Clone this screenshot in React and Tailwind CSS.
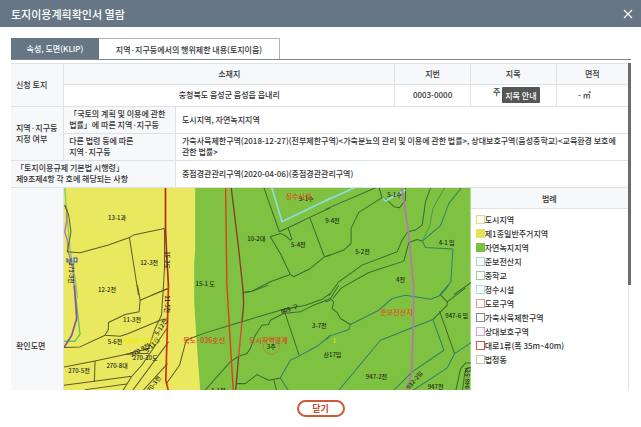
import React from "react";

const LINE = "#5d5b2c";
const FIELD = "#3a6b34";
const WATER = "#2f7f70";

// The survey is drawn in six sheets, each at three units to the map pixel.
const sheets = [
  {
    at: "translate(60 185) scale(0.33333)",
    lines: [
      ["#7bd06a", 4, "14,0 20,80 30,190 42,260 48,300 52,340"],
      ["#b36fc4", 4, "14,60 21,75 20,110 14,140 22,165 25,200 38,250 45,330"],
      [LINE, 3, "14,60 26,90 33,140 22,200 60,203 145,180 208,157 220,150 312,130"],
      [LINE, 3, "208,157 235,330"],
      [LINE, 3, "313,130 313,250 308,332"],
      [LINE, 3, "275,330 325,310"],
      ["#b3261c", 5, "316,0 316,130 320,220 325,302"],
    ],
  },
  {
    at: "translate(60 285) scale(0.33333)",
    lines: [
      ["#62c45a", 4, "48,40 60,147 45,168 12,168"],
      ["#8a4fa8", 5, "43,0 50,100 35,150 12,187"],
      [LINE, 3, "232,0 240,45 237,80 195,88 145,112 145,132 135,150 180,153 205,145 300,105 325,100"],
      [LINE, 3, "240,45 322,10"],
      [LINE, 3, "135,150 60,185 12,187"],
      [LINE, 3, "12,245 105,227 195,208 240,205 265,205"],
      [LINE, 3, "105,227 103,290"],
      [LINE, 3, "12,300 215,273 245,240 320,130"],
      [LINE, 3, "75,313 200,296"],
      [LINE, 3, "215,273 186,320"],
      [LINE, 3, "214,320 325,170"],
      [LINE, 3, "245,320 322,235"],
      [LINE, 3, "308,30 304,90 285,130 265,190 195,208"],
      [LINE, 3, "318,296 358,240 378,165 396,158"],
      ["#d92b1c", 5, "325,0 322,110 317,285 328,330"],
    ],
  },
  {
    at: "translate(190 185) scale(0.33333)",
    lines: [
      [FIELD, 3, "218,0 267,140 300,125 358,97 420,68"],
      ["#8fdde0", 5, "242,0 275,110 420,40"],
      [FIELD, 3, "293,128 305,162 300,165 285,152 270,145 240,155 270,205 300,268 310,275 360,250 402,215 358,97"],
      [FIELD, 3, "402,215 420,210"],
      [FIELD, 3, "160,322 185,318 240,290 300,268"],
      ["#df3a20", 4, "106,0 110,302"],
      ["#8a3b2c", 4, "122,0 145,190 160,330"],
    ],
  },
  {
    at: "translate(190 285) scale(0.33333)",
    lines: [
      [FIELD, 3, "0,160 45,143 120,120 280,72 345,60 395,42 420,25"],
      [FIELD, 3, "160,22 185,18 235,0"],
      [FIELD, 3, "420,40 370,60 330,80 280,85 240,105 235,118 215,120 195,150 180,190 170,205 145,213 120,230 40,320"],
      [FIELD, 3, "280,72 327,212"],
      [WATER, 3, "420,150 385,180 327,212 300,225 270,278 297,320"],
      [FIELD, 3, "138,295 165,295 200,268 235,285 270,278"],
      [FIELD, 3, "250,282 260,320"],
      ["#df3a20", 4, "110,0 120,170 130,330"],
      ["#8a3b2c", 4, "159,20 160,60 155,110"],
      ["#d84a3c", 4, "155,110 145,215"],
      ["#8a3b2c", 4, "145,215 135,330"],
    ],
  },
  {
    at: "translate(325 185) scale(0.33333)",
    lines: [
      ["#8fdde0", 5, "0,47 95,5"],
      [FIELD, 3, "0,73 160,4"],
      [FIELD, 3, "0,215 55,195 77,175 77,130 100,82 170,38 185,45 205,65 222,68 240,45 240,0"],
      [FIELD, 3, "158,0 170,38"],
      ["#8fdde0", 5, "172,38 180,48 240,15"],
      [FIELD, 3, "10,332 40,290 110,240 215,200 230,165 247,140 270,135 290,120 300,50 318,0"],
      [FIELD, 3, "22,340 48,308 130,262 235,228 250,172 275,163 290,168"],
      [WATER, 3, "290,168 300,187 382,192 376,290 342,330"],
      [WATER, 3, "290,168 345,122 370,55 414,0"],
      ["#4b9a4c", 3, "290,168 312,125 322,70 362,0"],
      [FIELD, 3, "385,328 437,292"],
      ["#b876b0", 5, "228,0 250,150 264,302"],
    ],
  },
  {
    at: "translate(325 285) scale(0.33333)",
    lines: [
      [WATER, 3, "0,165 15,152 70,133 75,118 160,75 200,40 240,30 315,42 345,30 370,0"],
      [FIELD, 3, "75,118 45,100 35,82 20,70 25,50 15,40 40,0"],
      [FIELD, 3, "0,50 15,45"],
      [FIELD, 3, "345,30 365,50 420,8"],
      [FIELD, 3, "365,50 365,60 322,103"],
      [WATER, 3, "322,103 165,165 36,320"],
      [WATER, 3, "322,103 355,195 260,260 200,320"],
      [FIELD, 3, "342,78 387,205"],
      [WATER, 3, "437,172 387,205 365,248 255,320"],
      [FIELD, 3, "390,320 405,250 420,233 437,233"],
      [FIELD, 3, "410,320 418,260 425,248 437,246"],
      ["#b876b0", 5, "264,0 263,130 258,265 240,320"],
    ],
  },
];

const lots = [
  ["13-1과", 117, 220], ["12-3전", 149, 265], ["12-2전", 107, 292],
  ["11-3전", 132, 322], ["5-6전", 115, 344], ["270-10도", 145, 360],
  ["270-8대", 117, 368], ["270-5전", 79, 373], ["10-2대", 256, 241],
  ["15-1 도", 205, 286], ["5-4전", 298, 247], ["5-1수", 306, 201],
  ["9-4전", 332, 223], ["5-1수", 394, 197], ["5-2전", 362, 254],
  ["4-1 임", 446, 245], ["4전", 400, 282], ["3-7전", 319, 328],
  ["3주", 271, 349], ["산17임", 332, 357], ["947-2전", 376, 379],
  ["947-6 임", 456, 318], ["947전", 435, 389], ["1-1전", 218, 393],
];

const turnedLots = [
  ["15-3도", 167, 260, 90], ["11-5전", 167, 304, 90], ["271-3전", 71, 273, 90],
  ["5-12전", 161, 327, -58], ["270-9전", 140, 350, -28], ["5-11전", 152, 345, -45],
  ["270-3전", 153, 385, -52], ["809-구", 289, 309, -18], ["932-2임", 414, 380, -50],
  ["948-5전", 467, 378, -88],
];

const zones = [
  ["정수시설", 298, 199, "#d9501f"],
  ["북도·036호선", 204, 343, "#d9421f"],
  ["도시지역경계", 268, 343, "#d9421f"],
  ["준보전산지", 396, 315, "#e0501c"],
];

function CadastralMap() {
  return (
    <svg
      viewBox="64 188 406 318"
      preserveAspectRatio="xMinYMin slice"
      className="block h-[318px] w-full"
      role="img"
      aria-label="확인도면"
    >
      <rect x="64" y="188" width="406" height="318" fill="#7fc241" />
      <path d="M64 188H195V250L194 262L194 300L196 335L200 390L208 506H64Z" fill="#e9e85e" />
      {sheets.map((sheet) => (
        <g key={sheet.at} transform={sheet.at} fill="none" strokeLinejoin="round">
          {sheet.lines.map(([color, width, points]) => (
            <polyline key={points} points={points} stroke={color} strokeWidth={width} />
          ))}
        </g>
      ))}
      <circle cx="271" cy="346" r="8" fill="none" stroke="#c9722f" strokeWidth="0.7" />
      <g fill="none" stroke="#3b49a8">
        <path d="M67 258v4h4v-4M67 260h4M74 258h3v4h-3z" />
      </g>
      <g textAnchor="middle" fontSize="6" fontWeight="500" fill="#20261a">
        {lots.map(([name, x, y]) => (
          <text key={name + x} x={x} y={y}>{name}</text>
        ))}
        {turnedLots.map(([name, x, y, turn]) => (
          <text key={name + x} transform={`translate(${x} ${y}) rotate(${turn})`} y="2">{name}</text>
        ))}
      </g>
      <g textAnchor="middle" fontSize="7">
        {zones.map(([name, x, y, color]) => (
          <text key={name} x={x} y={y} fill={color}>{name}</text>
        ))}
        <text x="141" y="343" fill="#f3e80c" fontSize="6">일반주거지역</text>
        <text x="334" y="343" fill="#e4e21c" fontSize="6">1</text>
      </g>
    </svg>
  );
}

const legend = [
  ["도시지역", "border-[#e2dc7c] bg-white"],
  ["제1종일반주거지역", "border-[#e4e25a] bg-[#e4e25a]"],
  ["자연녹지지역", "border-[#79c23f] bg-[#79c23f]"],
  ["준보전산지", "border-[#9adcd2] bg-white"],
  ["중학교", "border-[#9ccb9a] bg-white"],
  ["정수시설", "border-[#a9dcec] bg-white"],
  ["도로구역", "border-[#e09a96] bg-white"],
  ["가축사육제한구역", "border-[#8a8a8a] bg-white"],
  ["상대보호구역", "border-[#cfa0dc] bg-white"],
  ["대로1류(폭 35m~40m)", "border-[#d0533c] bg-white"],
  ["법정동", "border-[#cdbfae] bg-white"],
];

const head = "border-b border-r border-[#dfe1e3] bg-[#f7f8fa] px-0 pt-0 pb-[2px] font-medium";
const side = "border-b border-r border-[#dfe1e3] bg-[#f7f8fa] pt-0 pb-[2px] pl-[5px] pr-0 text-left font-medium";
const cell = "border-b border-r border-[#dfe1e3] pt-0 pb-[2px]";

export default function App() {
  return (
    <div className="flex h-screen flex-col bg-white font-['Noto_Sans_CJK_KR','Noto_Sans',sans-serif] text-[8px] leading-[11px] font-medium text-[#333]">
      <header className="flex h-[27px] shrink-0 items-center justify-between bg-[#667685] pl-[11px] pr-2 text-white">
        <h1 className="text-[11px] leading-4 font-medium">토지이용계획확인서 열람</h1>
        <button type="button" aria-label="창 닫기" className="block">
          <svg viewBox="0 0 10 10" className="block size-[10px]" fill="none" stroke="currentColor" strokeWidth="1.2">
            <path d="M1 1L9 9M9 1L1 9" />
          </svg>
        </button>
      </header>

      <main className="flex min-h-0 flex-1 flex-col pl-[11px] pr-[10px] pt-[11px]">
        <div role="tablist" className="flex h-[22px] shrink-0 border-b border-[#7b8592]">
          <button type="button" role="tab" aria-selected="true" className="w-[88px] bg-[#667685] text-white">
            속성, 도면(KLIP)
          </button>
          <button type="button" role="tab" aria-selected="false" className="w-[181px] border-r border-t border-[#b9b3b0]">
            지역·지구등에서의 행위제한 내용(토지이음)
          </button>
        </div>

        <div className="relative mt-[3px] min-h-0 flex-1">
          <div className="h-full overflow-y-auto pr-[2px] [scrollbar-width:none]">
            <table className="w-full table-fixed border-separate border-spacing-0 break-keep border-t border-[#dfe1e3]">
              <colgroup>
                <col className="w-[8.6%]" />
                <col className="w-[18.1%]" />
                <col className="w-[35.5%]" />
                <col className="w-[12.2%]" />
                <col className="w-[13.9%]" />
                <col />
              </colgroup>
              <tbody>
                <tr className="h-[21px]">
                  <th scope="row" rowSpan={2} className={side}>신청 토지</th>
                  <th scope="col" colSpan={2} className={head}>소재지</th>
                  <th scope="col" className={head}>지번</th>
                  <th scope="col" className={head}>지목</th>
                  <th scope="col" className={head}>면적</th>
                </tr>
                <tr className="h-[22px] text-center">
                  <td colSpan={2} className={cell}>충청북도 음성군 음성읍 읍내리</td>
                  <td className={cell}>0003-0000</td>
                  <td className={`${cell} pl-[6px]`}>
                    <span className="flex items-start justify-center gap-[2px]">
                      주
                      <button type="button" className="mt-px h-4 rounded-[1px] bg-[#555] px-[3px] text-white">지목 안내</button>
                    </span>
                  </td>
                  <td className={`${cell} pr-4`}>- ㎡</td>
                </tr>
                <tr className="h-[27px]">
                  <th scope="row" rowSpan={2} className={side}>지역·지구등<br />지정 여부</th>
                  <th scope="row" className={side}>「국토의 계획 및 이용에 관한<br />법률」에 따른 지역·지구등</th>
                  <td colSpan={4} className={`${cell} pl-[6px]`}>도시지역, 자연녹지지역</td>
                </tr>
                <tr className="h-[27px]">
                  <th scope="row" className={side}>다른 법령 등에 따른<br />지역·지구등</th>
                  <td colSpan={4} className={`${cell} pl-[6px]`}>
                    가축사육제한구역(2018-12-27)(전부제한구역)&lt;가축분뇨의 관리 및 이용에 관한 법률&gt;, 상대보호구역(음성중학교)&lt;교육환경 보호에 관한 법률&gt;
                  </td>
                </tr>
                <tr className="h-[27px]">
                  <th scope="row" colSpan={2} className={side}>「토지이용규제 기본법 시행령」<br />제9조제4항 각 호에 해당되는 사항</th>
                  <td colSpan={4} className={`${cell} pl-[6px]`}>중점경관관리구역(2020-04-06)(중점경관관리구역)</td>
                </tr>
                <tr>
                  <th scope="row" className={side}>확인도면</th>
                  <td colSpan={3} className="p-0 align-top"><CadastralMap /></td>
                  <td colSpan={2} className="border-r border-[#dfe1e3] p-0 align-top">
                    <h2 className="flex h-[21px] items-center justify-center border-b border-[#dfe1e3] bg-[#f7f8fa] font-medium">범례</h2>
                    <ul className="px-[5px] pt-[3px]">
                      {legend.map(([name, swatch]) => (
                        <li key={name} className="flex h-[14px] items-center">
                          <span className={`size-[9px] border ${swatch}`} />
                          {name}
                        </li>
                      ))}
                    </ul>
                  </td>
                </tr>
              </tbody>
            </table>
          </div>
          <div className="absolute right-0 top-0 h-[68%] w-[3px] bg-[#6b6b6b]" />
        </div>
      </main>

      <footer className="flex h-[37px] shrink-0 items-center justify-center">
        <button type="button" className="h-[17px] w-12 rounded-full border-2 border-[#cb5a37] text-[9px] leading-3 font-bold text-[#c14a28]">
          닫기
        </button>
      </footer>
    </div>
  );
}
